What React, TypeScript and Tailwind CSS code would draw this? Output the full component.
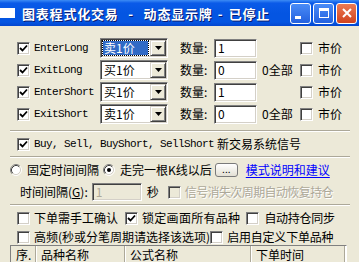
import React from "react"

const rows = [
  { name: "EnterLong", price: "卖1价", focused: true, qty: "1", all: false },
  { name: "ExitLong", price: "买1价", focused: false, qty: "0", all: true },
  { name: "EnterShort", price: "买1价", focused: false, qty: "1", all: false },
  { name: "ExitShort", price: "卖1价", focused: false, qty: "0", all: true },
]

const sunken =
  "border border-t-[#808080] border-l-[#808080] border-b-white border-r-white shadow-[inset_1px_1px_0_#404040,inset_-1px_-1px_0_#d4d0c8]"
const raised =
  "border border-t-[#d4d0c8] border-l-[#d4d0c8] border-b-[#404040] border-r-[#404040] shadow-[inset_1px_1px_0_#fff,inset_-1px_-1px_0_#808080]"

function Check({ checked = false, disabled = false }: { checked?: boolean; disabled?: boolean }) {
  return (
    <span
      className={`flex items-center justify-center w-[13px] h-[13px] shrink-0 ${sunken} ${
        disabled ? "bg-[#ece9d8]" : "bg-white"
      }`}
    >
      {checked && (
        <svg width="9" height="9" viewBox="0 0 9 9">
          <path d="M1 4 L3.5 6.5 L8 1.5" fill="none" stroke="#000" strokeWidth="1.8" />
        </svg>
      )}
    </span>
  )
}

function Radio({ on = false }: { on?: boolean }) {
  return (
    <svg width="12" height="12" viewBox="0 0 12 12" className="shrink-0">
      <circle cx="6" cy="6" r="4.5" fill="#fff" />
      <path d="M2.11 9.89 A5.5 5.5 0 0 1 9.89 2.11" fill="none" stroke="#808080" />
      <path d="M9.89 2.11 A5.5 5.5 0 0 1 2.11 9.89" fill="none" stroke="#fff" />
      <path d="M2.82 9.18 A4.5 4.5 0 0 1 9.18 2.82" fill="none" stroke="#404040" />
      <path d="M9.18 2.82 A4.5 4.5 0 0 1 2.82 9.18" fill="none" stroke="#d4d0c8" />
      {on && <circle cx="6" cy="6" r="2" fill="#000" />}
    </svg>
  )
}

function Combo({ value, focused }: { value: string; focused: boolean }) {
  return (
    <div className={`flex items-center w-[68px] h-[20px] bg-white ${sunken} pl-[2px] pr-[1px]`}>
      <span
        className={`flex-1 h-[14px] flex items-center pl-[1px] mr-[2px] ${
          focused ? "bg-[#316ac5] text-white outline outline-1 outline-dotted outline-[#000]" : ""
        }`}
      >
        {value}
      </span>
      <span className={`flex items-center justify-center w-[16px] h-[16px] bg-[#ece9d8] ${raised}`}>
        <svg width="7" height="4" viewBox="0 0 7 4">
          <path d="M0 0 H7 L3.5 4 Z" fill="#000" />
        </svg>
      </span>
    </div>
  )
}

function Groove({ className = "" }: { className?: string }) {
  return <div className={`h-[2px] border-t border-t-[#aca899] border-b border-b-white ${className}`} />
}

function TitleBar() {
  return (
    <div className="h-[26px] flex items-center bg-[linear-gradient(180deg,#3d8cf5_0%,#0a5ae8_12%,#0455e2_50%,#0455e2_85%,#0346cf_100%)]">
      <div className="w-[15px] h-[10px] bg-white" />
      <div className="ml-[7px] flex items-center text-white font-bold text-[13px] tracking-[0.8px] [text-shadow:1px_1px_0_#0a1b6e]">
        <span>图表程式化交易</span>
        <span className="w-[25px] text-center">-</span>
        <span>动态显示牌</span>
        <span className="w-[16px] text-center">-</span>
        <span>已停止</span>
      </div>
      <div className="ml-auto mr-[2px] flex gap-[2px]">
        <div className="w-[21px] h-[21px] rounded-[3px] border border-white bg-[linear-gradient(180deg,#4a8cf7,#2361df)] flex items-end pl-[4px] pb-[4px]">
          <div className="w-[6px] h-[3px] bg-white" />
        </div>
        <div className="w-[21px] h-[21px] rounded-[3px] border border-white bg-[linear-gradient(180deg,#4a8cf7,#2361df)] flex items-center justify-center">
          <div className="w-[10px] h-[10px] border border-white border-t-[3px]" />
        </div>
        <div className="w-[21px] h-[21px] rounded-[3px] border border-white bg-[linear-gradient(180deg,#ec7b55,#d0431f)] flex items-center justify-center">
          <svg width="10" height="10" viewBox="0 0 10 10">
            <path d="M1 1 L9 9 M9 1 L1 9" stroke="#fff" strokeWidth="2" />
          </svg>
        </div>
      </div>
    </div>
  )
}

export default function App() {
  return (
    <div className="w-[359px] h-[262px] overflow-hidden bg-[#ece9d8] font-['Noto_Sans_CJK_SC',sans-serif] text-[12px] leading-none text-black">
      <TitleBar />

      <div className="pt-[11px]">
        {rows.map((r) => (
          <div key={r.name} className="h-[22px] flex items-center">
            <div className="w-[34px] pl-[17px] flex">
              <Check checked />
            </div>
            <span className="w-[66px] font-['Liberation_Mono',monospace] text-[11px] tracking-[-0.6px]">{r.name}</span>
            <Combo value={r.price} focused={r.focused} />
            <span className="w-[46px] pl-[12px]">数量:</span>
            <div className={`w-[43px] h-[19px] bg-white ${sunken} flex items-center pl-[3px]`}>{r.qty}</div>
            <span className="w-[43px] pl-[5px]">{r.all ? "0全部" : ""}</span>
            <Check />
            <span className="ml-[5px]">市价</span>
          </div>
        ))}
      </div>

      <Groove className="mt-[5px] ml-[10px] mr-[9px]" />

      <div className="h-[24px] flex items-center pl-[17px]">
        <Check checked />
        <span className="ml-[4px] font-['Liberation_Mono',monospace] text-[11px] tracking-[-0.6px] whitespace-pre">
          Buy, Sell, BuyShort, SellShort
        </span>
        <span className="ml-[3px]">新交易系统信号</span>
      </div>

      <Groove className="ml-[10px] mr-[9px]" />

      <div className="h-[24px] flex items-center pl-[10px]">
        <Radio />
        <span className="ml-[5px]">固定时间间隔</span>
        <span className="ml-[4px]">
          <Radio on />
        </span>
        <span className="ml-[5px]">走完一根K线以后</span>
        <span className="ml-[3px] w-[23px] h-[14px] rounded-[3px] border border-[#7a7a7a] bg-[linear-gradient(180deg,#fff,#e3e0d4)] flex items-center justify-center text-[10px] pb-[3px]">
          ...
        </span>
        <span className="ml-[8px] text-[#0000ff] underline underline-offset-2">模式说明和建议</span>
      </div>

      <div className="h-[20px] flex items-center pl-[20px]">
        <span>
          时间间隔(<span className="underline">G</span>):
        </span>
        <div className={`ml-[4px] w-[50px] h-[18px] bg-[#ece9d8] ${sunken} flex items-center pl-[3px] text-[#aca899]`}>1</div>
        <span className="ml-[5px]">秒</span>
        <span className="ml-[9px]">
          <Check disabled />
        </span>
        <span className="ml-[4px] tracking-[-0.6px] text-[#aca899] [text-shadow:1px_1px_0_#fff]">信号消失次周期自动恢复持仓</span>
      </div>

      <Groove className="mt-[2px] ml-[10px] mr-[9px]" />

      <div className="h-[24px] flex items-center pl-[17px]">
        <Check />
        <span className="ml-[4px]">下单需手工确认</span>
        <span className="ml-[7px]">
          <Check checked />
        </span>
        <span className="ml-[4px] tracking-[0.3px]">锁定画面所有品种</span>
        <span className="ml-[6px]">
          <Check />
        </span>
        <span className="ml-[5px] tracking-[-0.3px]">自动持仓同步</span>
      </div>

      <div className="h-[14px] flex items-center pl-[17px]">
        <Check />
        <span className="ml-[4px]">高频(秒或分笔周期请选择该选项)</span>
        <span className="ml-[0px]">
          <Check />
        </span>
        <span className="ml-[4px] tracking-[-0.2px]">启用自定义下单品种</span>
      </div>

      <div className={`mt-[1px] ml-[10px] mr-[12px] h-[30px] bg-white ${sunken}`}>
        <div className="flex h-[18px] bg-[#ece9d8]">
          {[
            ["序.", "w-[25px]"],
            ["品种名称", "w-[89px]"],
            ["公式名称", "w-[126px]"],
            ["下单时间", "w-[94px]"],
          ].map(([t, w]) => (
            <div key={t} className={`${w} flex items-center pl-[5px] border-r border-r-[#aca899] shadow-[1px_0_0_#fff]`}>
              {t}
            </div>
          ))}
        </div>
      </div>
    </div>
  )
}
